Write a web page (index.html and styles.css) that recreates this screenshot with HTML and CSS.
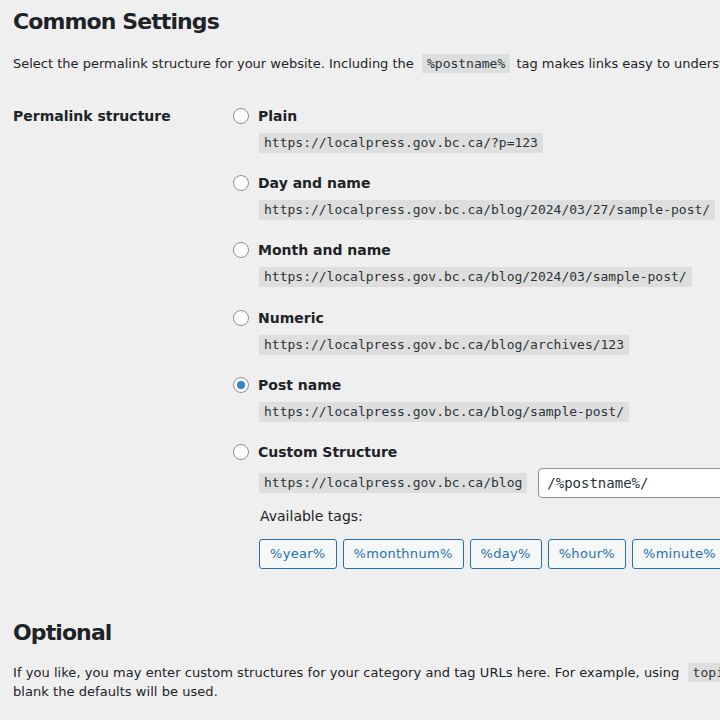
FILE: index.html
```html
<!DOCTYPE html>
<html lang="en">
<head>
<meta charset="utf-8">
<title>Permalink Settings</title>
<link rel="stylesheet" href="styles.css">
</head>
<body>
<div class="wrap">
  <h2 class="title">Common Settings</h2>
  <p class="desc">Select the permalink structure for your website. Including the <code>%postname%</code> tag makes links easy to understand, and can help your posts rank better in search engines.</p>

  <div class="form-row">
    <div class="row-label">Permalink structure</div>
    <div class="row-field">
      <div class="option">
        <label class="opt-label"><span class="radio"></span>Plain</label>
        <div class="opt-url"><code>https://localpress.gov.bc.ca/?p=123</code></div>
      </div>
      <div class="option">
        <label class="opt-label"><span class="radio"></span>Day and name</label>
        <div class="opt-url"><code>https://localpress.gov.bc.ca/blog/2024/03/27/sample-post/</code></div>
      </div>
      <div class="option">
        <label class="opt-label"><span class="radio"></span>Month and name</label>
        <div class="opt-url"><code>https://localpress.gov.bc.ca/blog/2024/03/sample-post/</code></div>
      </div>
      <div class="option">
        <label class="opt-label"><span class="radio"></span>Numeric</label>
        <div class="opt-url"><code>https://localpress.gov.bc.ca/blog/archives/123</code></div>
      </div>
      <div class="option">
        <label class="opt-label"><span class="radio checked"></span>Post name</label>
        <div class="opt-url"><code>https://localpress.gov.bc.ca/blog/sample-post/</code></div>
      </div>
      <div class="option custom">
        <label class="opt-label"><span class="radio"></span>Custom Structure</label>
        <div class="custom-line">
          <code>https://localpress.gov.bc.ca/blog</code>
          <div class="text-input">/%postname%/</div>
        </div>
        <div class="avail">Available tags:</div>
        <div class="tags">
          <button class="tag">%year%</button>
          <button class="tag">%monthnum%</button>
          <button class="tag">%day%</button>
          <button class="tag">%hour%</button>
          <button class="tag">%minute%</button>
          <button class="tag">%second%</button>
        </div>
      </div>
    </div>
  </div>

  <h2 class="title optional">Optional</h2>
  <p class="desc desc2">If you like, you may enter custom structures for your category and tag URLs here. For example, using <code>topics</code> as your category base would make your category links like <code>https://localpress.gov.bc.ca/blog/topics/uncategorized/</code>. If you leave these<br>blank the defaults will be used.</p>
</div>
</body>
</html>
```

FILE: styles.css
```css
html, body {
  margin: 0;
  padding: 0;
  background: #efefef;
  overflow: hidden;
}
body {
  font-family: "DejaVu Sans", Verdana, sans-serif;
  font-size: 13px;
  color: #1d2327;
  line-height: 1.5;
}
.wrap {
  padding: 0 0 0 13px;
  width: 1800px;
}
.title {
  font-size: 22px;
  font-weight: 700;
  letter-spacing: -0.9px;
  margin: 0;
  padding-top: 8px;
  line-height: 28px;
}
.desc {
  margin: 18px 0 0;
  white-space: nowrap;
  line-height: 20px;
}
code {
  font-family: "DejaVu Sans Mono", monospace;
  font-size: 13px;
  background: #dedede;
  color: #2c3338;
  padding: 2px 5px 2px;
}
.desc code {
  margin: 0 2px 0 4px;
}
.form-row {
  display: flex;
  margin-top: 32px;
}
.row-label {
  width: 220px;
  flex: none;
  font-weight: 700;
  font-size: 14px;
  line-height: 20px;
}
.row-field {
  display: flex;
  flex-direction: column;
  gap: 20px;
}
.option {
  display: flex;
  flex-direction: column;
  gap: 7px;
}
.option:nth-child(n+4) {
  margin-top: 1px;
}
.option:nth-child(n+5) {
  margin-top: 0;
}
.opt-label {
  display: flex;
  align-items: center;
  gap: 9px;
  font-weight: 700;
  font-size: 14px;
  line-height: 20px;
}
.radio {
  width: 14px;
  height: 14px;
  border: 1px solid #8c8f94;
  border-radius: 50%;
  background: #fff;
  display: flex;
  align-items: center;
  justify-content: center;
  flex: none;
}
.radio.checked::before {
  content: "";
  width: 8px;
  height: 8px;
  border-radius: 50%;
  background: #3582c4;
}
.opt-url {
  padding-left: 26px;
  line-height: 20px;
}
.opt-url code {
  display: inline-block;
  padding: 0 5px;
  line-height: 20px;
}
.custom {
  margin-top: 1px;
}
.custom-line {
  display: flex;
  align-items: center;
  gap: 11px;
  padding-left: 26px;
  margin-top: -1px;
}
.custom-line code {
  display: inline-block;
  padding: 0 5px;
  line-height: 20px;
}
.text-input {
  width: 360px;
  height: 28px;
  border: 1px solid #8c8f94;
  border-radius: 4px;
  background: #fff;
  font-family: "DejaVu Sans Mono", monospace;
  font-size: 14px;
  line-height: 28px;
  padding: 0 8px;
  color: #2c3338;
}
.avail {
  padding-left: 27px;
  font-size: 14px;
  line-height: 20px;
  margin-top: 1px;
}
.tags {
  display: flex;
  gap: 6px;
  padding-left: 26px;
  margin-top: 6px;
}
.tag {
  font-family: "DejaVu Sans", Verdana, sans-serif;
  font-size: 13px;
  letter-spacing: 0.3px;
  height: 30px;
  padding: 0 10px;
  border: 1px solid #2271b1;
  border-radius: 3px;
  background: #f6f7f7;
  color: #2271b1;
  line-height: 28px;
}
.optional {
  margin-top: 50px;
  padding-top: 0;
}
.desc2 {
  margin-top: 16px;
  line-height: 19px;
  letter-spacing: 0.05px;
}
.desc2 code {
  padding: 2px 5px;
  margin: 0 1px 0 4px;
}
```
